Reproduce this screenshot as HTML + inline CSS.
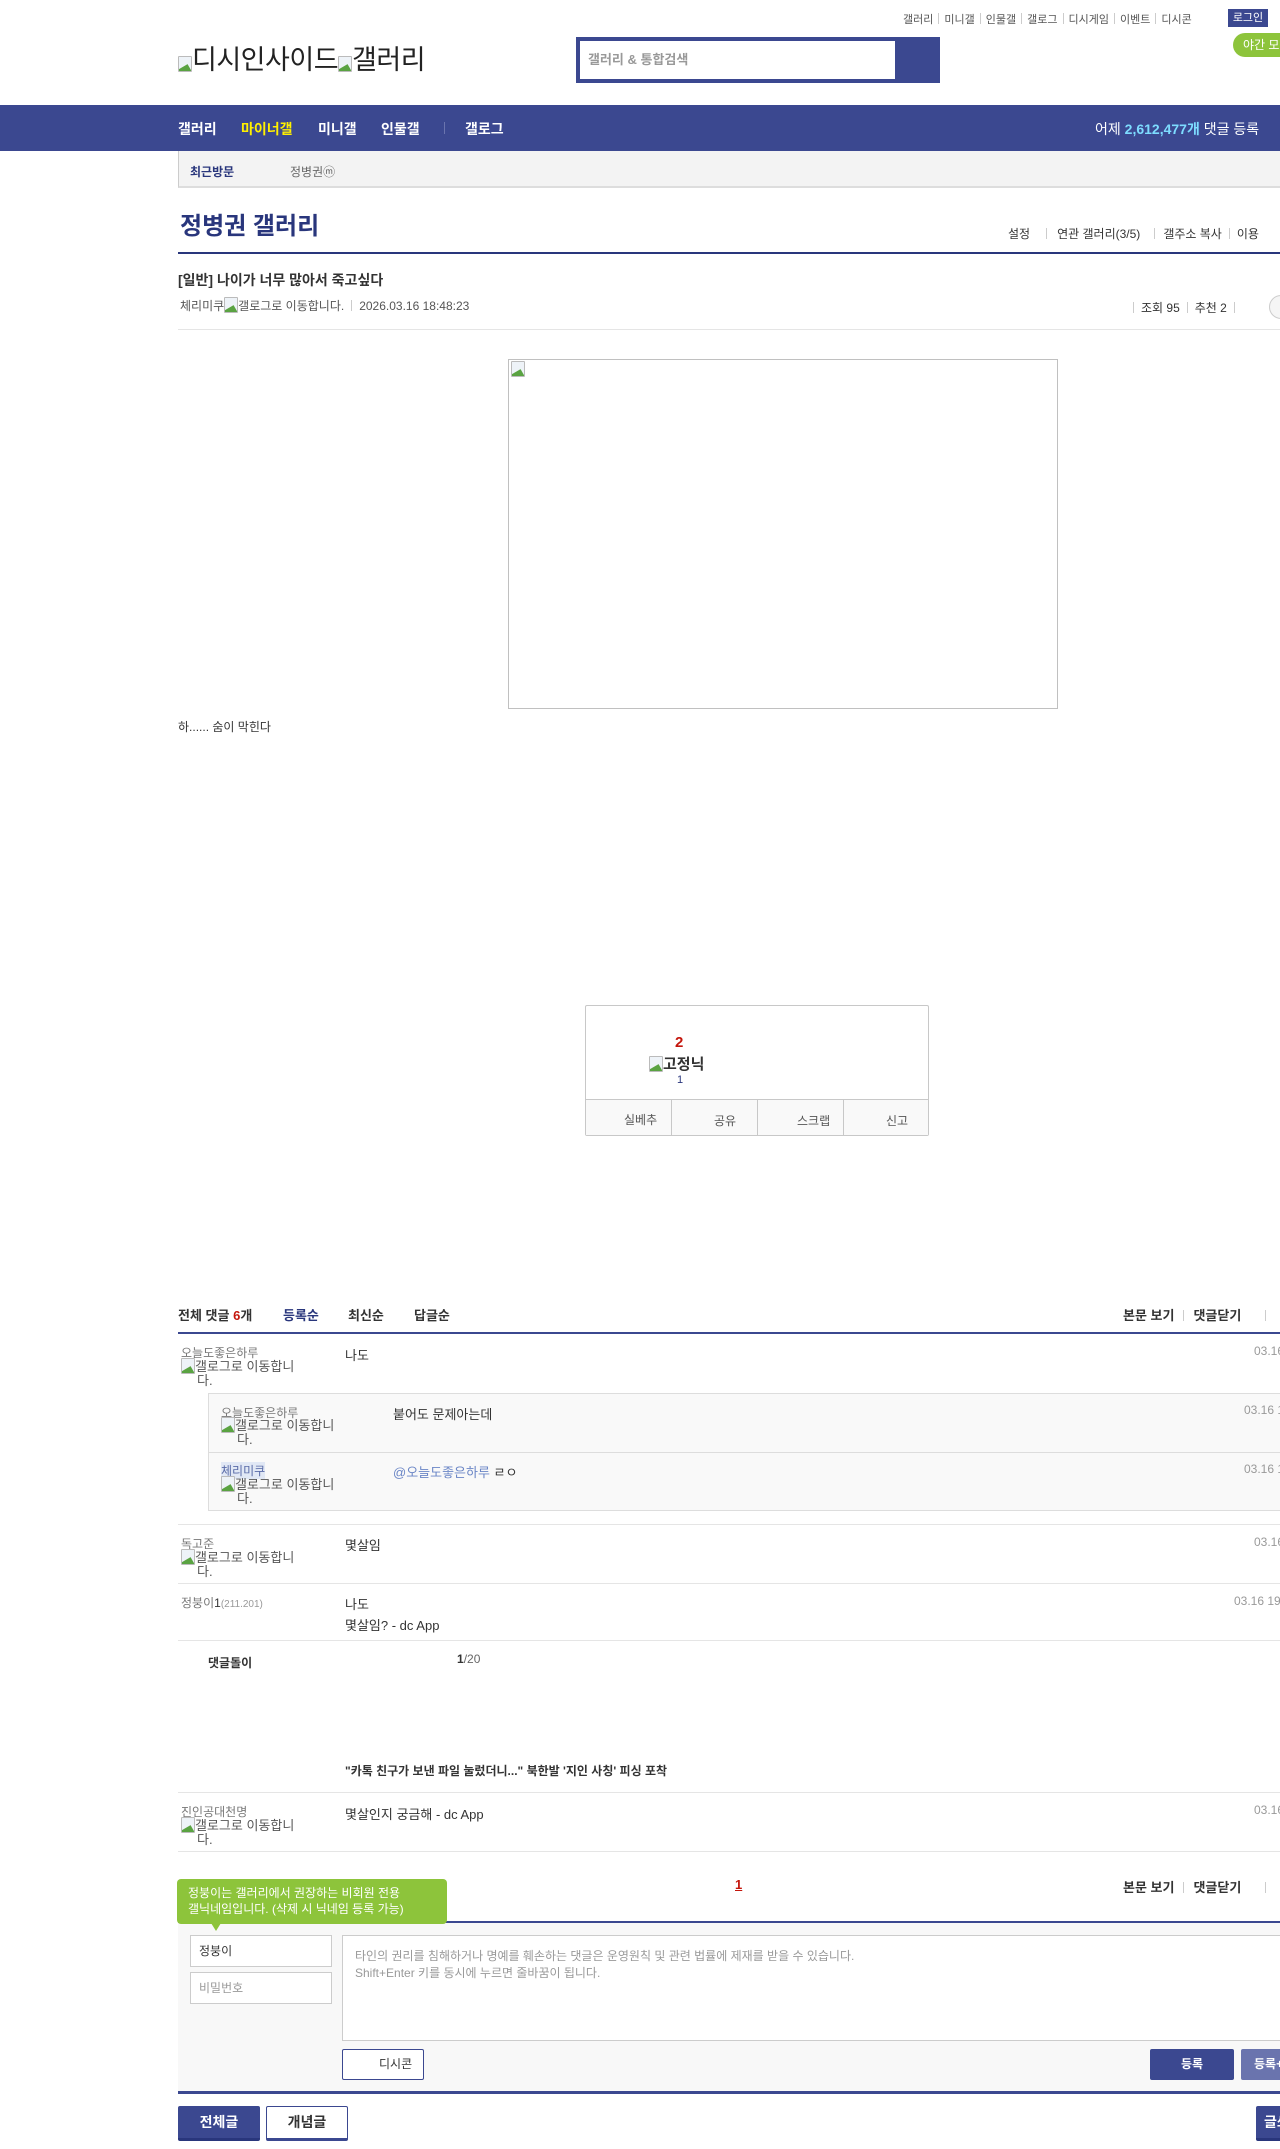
<!DOCTYPE html>
<html><head><meta charset="utf-8">
<style>
*{margin:0;padding:0;box-sizing:border-box}
html,body{width:1280px;height:2149px;overflow:hidden;background:#fff}
body{position:relative;font-family:"Liberation Sans","Noto Sans CJK KR",sans-serif;font-size:12px;color:#333}
.a{position:absolute;white-space:nowrap}
.bi{display:inline-block;width:14px;height:16px;vertical-align:-3px;position:relative;border:1px solid #bbb;border-radius:1px;background:#eef3f8;overflow:hidden}
.bi:after{content:"";position:absolute;left:-2px;bottom:-6px;width:14px;height:10px;background:#5aa342;transform:rotate(-30deg)}
.hl{position:absolute;height:1px;background:#e5e5e5}
.sep{display:inline-block;width:1px;height:11px;background:#ccc;margin:0 7px;vertical-align:-1px}
.nick{color:#777;font-size:12px}
.alt{color:#555;font-size:13px;line-height:14px;white-space:normal;width:128px;padding-left:16px;text-indent:-16px}
</style></head><body>

<div class="a" style="top:11px;left:903px;font-size:11px;color:#555">갤러리<span class="sep" style="margin:0 5px"></span>미니갤<span class="sep" style="margin:0 5px"></span>인물갤<span class="sep" style="margin:0 5px"></span>갤로그<span class="sep" style="margin:0 5px"></span>디시게임<span class="sep" style="margin:0 5px"></span>이벤트<span class="sep" style="margin:0 5px"></span>디시콘</div>
<div class="a" style="top:9px;left:1228px;width:40px;height:18px;background:#3b4890;color:#fff;font-size:11px;text-align:center;line-height:18px">로그인</div>
<div class="a" style="top:33px;left:1233px;width:60px;height:24px;background:#8dc43b;color:#fff;border-radius:12px;font-size:12px;line-height:24px;padding-left:10px">야간 모드</div>

<div class="a" style="top:38px;left:178px;font-size:27px;color:#222;letter-spacing:-0.5px"><span class="bi"></span>디시인사이드<span class="bi"></span>갤러리</div>

<div class="a" style="top:37px;left:576px;width:364px;height:46px;background:#3b4890"></div>
<div class="a" style="top:41px;left:580px;width:315px;height:38px;background:#fff;color:#999;font-size:13px;line-height:38px;padding-left:8px;font-weight:bold">갤러리 &amp; 통합검색</div>

<div class="a" style="top:105px;left:0;width:1280px;height:46px;background:#3b4890"></div>
<div class="a" style="top:119px;left:178px;color:#fff;font-size:14px;font-weight:bold">갤러리</div>
<div class="a" style="top:119px;left:241px;color:#fff000;font-size:14px;font-weight:bold">마이너갤</div>
<div class="a" style="top:119px;left:318px;color:#fff;font-size:14px;font-weight:bold">미니갤</div>
<div class="a" style="top:119px;left:381px;color:#fff;font-size:14px;font-weight:bold">인물갤</div>
<div class="a" style="top:122px;left:444px;width:1px;height:12px;background:#6a74ae"></div>
<div class="a" style="top:119px;left:465px;color:#fff;font-size:14px;font-weight:bold">갤로그</div>
<div class="a" style="top:119px;left:1095px;color:#fff;font-size:14px">어제 <b style="color:#7ddcff">2,612,477개</b> 댓글 등록</div>

<div class="a" style="top:151px;left:178px;width:1102px;height:37px;background:#f3f3f3;border-left:1px solid #ccc;border-bottom:2px solid #ddd"></div>
<div class="a" style="top:163px;left:190px;color:#29367c;font-size:12px;font-weight:bold">최근방문</div>
<div class="a" style="top:163px;left:290px;color:#666;font-size:12px">정병권ⓜ</div>

<div class="a" style="top:206px;left:180px;color:#29367c;font-size:24px;font-weight:bold">정병권 갤러리</div>
<div class="a" style="top:225px;left:1008px;color:#333;font-size:12px">설정<span class="sep" style="margin:0 10px 0 16px"></span>연관 갤러리(3/5)<span class="sep" style="margin:0 8px 0 14px"></span>갤주소 복사<span class="sep"></span>이용</div>
<div class="a" style="top:252px;left:178px;width:1102px;height:2px;background:#29367c"></div>

<div class="a" style="top:270px;left:178px;font-size:14px;font-weight:bold;color:#333">[일반] 나이가 너무 많아서 죽고싶다</div>
<div class="a" style="top:297px;left:180px;font-size:12px;color:#555">체리미쿠<span class="bi"></span>갤로그로 이동합니다.<span class="sep"></span>2026.03.16 18:48:23</div>
<div class="a" style="top:299px;left:1133px;font-size:12px;color:#333"><span class="sep" style="margin-left:0"></span>조회 95<span class="sep"></span>추천 2<span class="sep"></span></div>
<div class="a" style="top:295px;left:1269px;width:24px;height:24px;border:1px solid #ccc;border-radius:12px;background:#f5f5f5"></div>
<div class="hl" style="top:329px;left:178px;width:1102px"></div>

<div class="a" style="top:359px;left:508px;width:550px;height:350px;border:1px solid #c0c0c0"></div>
<div class="a" style="top:361px;left:511px"><span class="bi"></span></div>
<div class="a" style="top:718px;left:178px;font-size:12px;color:#333">하...... 숨이 막힌다</div>

<div class="a" style="top:1005px;left:585px;width:344px;height:131px;border:1px solid #c8c8c8;border-radius:2px"></div>
<div class="a" style="top:1034px;left:675px;color:#c4160c;font-size:15px;font-weight:bold">2</div>
<div class="a" style="top:1053px;left:649px;color:#333;font-size:15px;font-weight:bold"><span class="bi"></span>고정닉</div>
<div class="a" style="top:1074px;left:677px;color:#29367c;font-size:11px">1</div>
<div class="a" style="top:1099px;left:586px;width:342px;height:36px;background:#f9f9f9;border-top:1px solid #c8c8c8"></div>
<div class="a" style="top:1099px;left:671px;width:1px;height:36px;background:#c8c8c8"></div>
<div class="a" style="top:1099px;left:757px;width:1px;height:36px;background:#c8c8c8"></div>
<div class="a" style="top:1099px;left:843px;width:1px;height:36px;background:#c8c8c8"></div>
<div class="a" style="top:1111px;left:624px;font-size:12px;color:#555">실베추</div>
<div class="a" style="top:1112px;left:714px;font-size:12px;color:#555">공유</div>
<div class="a" style="top:1112px;left:797px;font-size:12px;color:#555">스크랩</div>
<div class="a" style="top:1112px;left:886px;font-size:12px;color:#555">신고</div>

<div class="a" style="top:1305px;left:178px;font-size:13px;font-weight:bold;color:#333">전체 댓글 <span style="color:#c4160c">6</span>개</div>
<div class="a" style="top:1305px;left:283px;font-size:13px;font-weight:bold;color:#29367c">등록순</div>
<div class="a" style="top:1305px;left:348px;font-size:13px;font-weight:bold;color:#333">최신순</div>
<div class="a" style="top:1305px;left:414px;font-size:13px;font-weight:bold;color:#333">답글순</div>
<div class="a" style="top:1305px;left:1123px;font-size:13px;font-weight:bold;color:#333">본문 보기<span class="sep" style="margin:0 9px"></span>댓글닫기<span class="sep" style="margin-left:24px"></span></div>
<div class="a" style="top:1332px;left:178px;width:1102px;height:2px;background:#3b4890"></div>

<div class="a nick" style="top:1344px;left:181px">오늘도좋은하루</div>
<div class="a alt" style="top:1358px;left:181px"><span class="bi"></span>갤로그로 이동합니다.</div>
<div class="a" style="top:1345px;left:345px;font-size:13px">나도</div>
<div class="a" style="top:1344px;left:1254px;font-size:12px;color:#999">03.16 18:50:10</div>

<div class="a" style="top:1393px;left:208px;width:1080px;height:118px;background:#f9f9f9;border:1px solid #ddd"></div>
<div class="hl" style="top:1452px;left:209px;width:1071px;background:#ddd"></div>
<div class="a nick" style="top:1404px;left:221px">오늘도좋은하루</div>
<div class="a alt" style="top:1417px;left:221px"><span class="bi"></span>갤로그로 이동합니다.</div>
<div class="a" style="top:1404px;left:393px;font-size:13px">붙어도 문제아는데</div>
<div class="a" style="top:1403px;left:1244px;font-size:12px;color:#999">03.16 18:51:02</div>
<div class="a nick" style="top:1462px;left:221px;background:#e1e8f5;color:#5a6ca8">체리미쿠</div>
<div class="a alt" style="top:1476px;left:221px"><span class="bi"></span>갤로그로 이동합니다.</div>
<div class="a" style="top:1462px;left:393px;font-size:13px"><span style="color:#6b86c6">@오늘도좋은하루</span> ㄹㅇ</div>
<div class="a" style="top:1462px;left:1244px;font-size:12px;color:#999">03.16 18:52:11</div>
<div class="hl" style="top:1524px;left:178px;width:1102px"></div>

<div class="a nick" style="top:1535px;left:181px">독고준</div>
<div class="a alt" style="top:1549px;left:181px"><span class="bi"></span>갤로그로 이동합니다.</div>
<div class="a" style="top:1535px;left:345px;font-size:13px">몇살임</div>
<div class="a" style="top:1535px;left:1254px;font-size:12px;color:#999">03.16 18:55:40</div>
<div class="hl" style="top:1583px;left:178px;width:1102px"></div>

<div class="a nick" style="top:1594px;left:181px">정붕이<span style="color:#333">1</span><span style="font-size:10px;color:#999">(211.201)</span></div>
<div class="a" style="top:1594px;left:345px;font-size:13px">나도</div>
<div class="a" style="top:1615px;left:345px;font-size:13px">몇살임? - dc App</div>
<div class="a" style="top:1594px;left:1234px;font-size:12px;color:#999">03.16 19:01:22</div>
<div class="hl" style="top:1640px;left:178px;width:1102px"></div>

<div class="a" style="top:1654px;left:208px;font-size:12px;font-weight:bold;color:#333">댓글돌이</div>
<div class="a" style="top:1652px;left:457px;font-size:12px;color:#666"><b style="color:#333">1</b>/20</div>
<div class="a" style="top:1762px;left:345px;font-size:12px;font-weight:bold;color:#333">"카톡 친구가 보낸 파일 눌렀더니..." 북한발 '지인 사칭' 피싱 포착</div>
<div class="hl" style="top:1792px;left:178px;width:1102px"></div>

<div class="a nick" style="top:1803px;left:181px">진인공대천명</div>
<div class="a alt" style="top:1817px;left:181px"><span class="bi"></span>갤로그로 이동합니다.</div>
<div class="a" style="top:1804px;left:345px;font-size:13px">몇살인지 궁금해 - dc App</div>
<div class="a" style="top:1803px;left:1254px;font-size:12px;color:#999">03.16 19:10:01</div>
<div class="hl" style="top:1851px;left:178px;width:1102px"></div>

<div class="a" style="top:1877px;left:735px;font-size:13px;font-weight:bold;color:#c4160c;text-decoration:underline">1</div>
<div class="a" style="top:1877px;left:1123px;font-size:13px;font-weight:bold;color:#333">본문 보기<span class="sep" style="margin:0 9px"></span>댓글닫기<span class="sep" style="margin-left:24px"></span></div>

<div class="a" style="top:1921px;left:178px;width:1102px;height:2px;background:#3b4890"></div>
<div class="a" style="top:1923px;left:178px;width:1102px;height:169px;background:#f8f8f8"></div>
<div class="a" style="top:1879px;left:177px;width:270px;height:45px;background:#8dc43b;border-radius:4px;color:#fff;font-size:12px;line-height:16px;padding:6px 0 0 11px;white-space:normal">정붕이는 갤러리에서 권장하는 비회원 전용<br>갤닉네임입니다. (삭제 시 닉네임 등록 가능)</div>
<div class="a" style="top:1923px;left:211px;width:0;height:0;border-left:5px solid transparent;border-right:5px solid transparent;border-top:8px solid #8dc43b"></div>
<div class="a" style="top:1935px;left:190px;width:142px;height:32px;background:#fff;border:1px solid #ccc;font-size:12px;color:#333;line-height:30px;padding-left:8px">정붕이</div>
<div class="a" style="top:1972px;left:190px;width:142px;height:32px;background:#fff;border:1px solid #ccc;font-size:12px;color:#999;line-height:30px;padding-left:8px">비밀번호</div>
<div class="a" style="top:1935px;left:342px;width:950px;height:106px;background:#fff;border:1px solid #ccc;font-size:12px;color:#999;line-height:17px;padding:12px 0 0 12px;white-space:normal">타인의 권리를 침해하거나 명예를 훼손하는 댓글은 운영원칙 및 관련 법률에 제재를 받을 수 있습니다.<br>Shift+Enter 키를 동시에 누르면 줄바꿈이 됩니다.</div>
<div class="a" style="top:2049px;left:342px;width:82px;height:31px;background:#fff;border:1px solid #3b4890;border-radius:2px;font-size:12px;color:#333;line-height:29px;padding-left:36px">디시콘</div>
<div class="a" style="top:2049px;left:1150px;width:84px;height:31px;background:#3b4890;border-radius:2px;font-size:12px;color:#fff;font-weight:bold;line-height:31px;text-align:center">등록</div>
<div class="a" style="top:2049px;left:1241px;width:84px;height:31px;background:#6a74ae;border-radius:2px;font-size:12px;color:#fff;font-weight:bold;line-height:31px;padding-left:13px">등록+추천</div>
<div class="a" style="top:2091px;left:178px;width:1102px;height:3px;background:#3b4890"></div>

<div class="a" style="top:2106px;left:178px;width:82px;height:35px;background:#3b4890;border-bottom:3px solid #29367c;border-radius:2px;color:#fff;font-size:14px;font-weight:bold;line-height:33px;text-align:center">전체글</div>
<div class="a" style="top:2106px;left:266px;width:82px;height:35px;background:#fff;border:1px solid #3b4890;border-bottom:3px solid #3b4890;border-radius:2px;color:#333;font-size:14px;font-weight:bold;line-height:31px;text-align:center">개념글</div>
<div class="a" style="top:2106px;left:1256px;width:82px;height:35px;background:#3b4890;border-bottom:3px solid #29367c;border-radius:2px;color:#fff;font-size:14px;font-weight:bold;line-height:33px;padding-left:8px">글쓰기</div>

</body></html>
